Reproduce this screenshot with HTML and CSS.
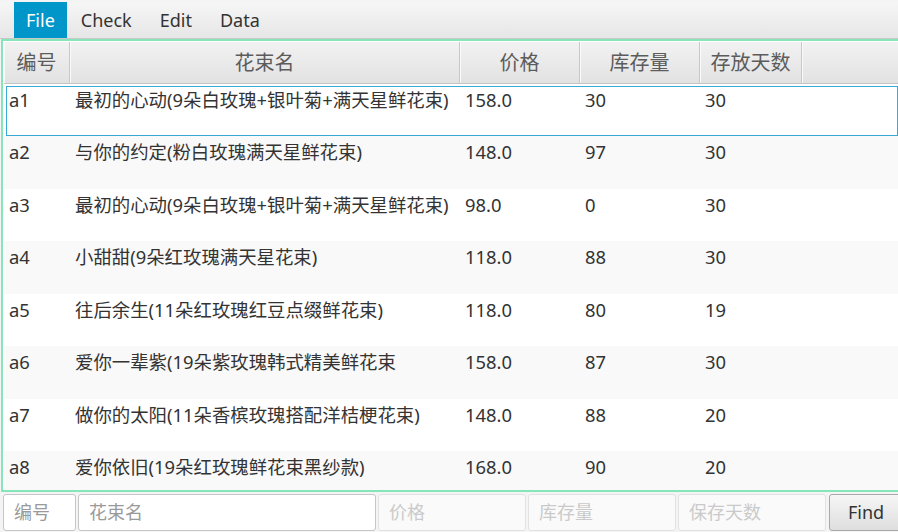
FILE: index.html
```html
<!DOCTYPE html>
<html>
<head>
<meta charset="utf-8">
<link rel="stylesheet" href="styles.css">
</head>
<body>
<div class="app">
  <div class="menubar">
    <div class="menu active">File</div>
    <div class="menu">Check</div>
    <div class="menu">Edit</div>
    <div class="menu">Data</div>
  </div>
  <div class="table">
    <div class="header">
      <div class="hcell c1">编号</div>
      <div class="hcell c2">花束名</div>
      <div class="hcell c3">价格</div>
      <div class="hcell c4">库存量</div>
      <div class="hcell c5">存放天数</div>
      <div class="hcell filler"></div>
    </div>
    <div class="body">
      <div class="row selected"><div class="cell c1">a1</div><div class="cell c2">最初的心动(9朵白玫瑰+银叶菊+满天星鲜花束)</div><div class="cell c3">158.0</div><div class="cell c4">30</div><div class="cell c5">30</div></div>
      <div class="row odd"><div class="cell c1">a2</div><div class="cell c2">与你的约定(粉白玫瑰满天星鲜花束)</div><div class="cell c3">148.0</div><div class="cell c4">97</div><div class="cell c5">30</div></div>
      <div class="row"><div class="cell c1">a3</div><div class="cell c2">最初的心动(9朵白玫瑰+银叶菊+满天星鲜花束)</div><div class="cell c3">98.0</div><div class="cell c4">0</div><div class="cell c5">30</div></div>
      <div class="row odd"><div class="cell c1">a4</div><div class="cell c2">小甜甜(9朵红玫瑰满天星花束)</div><div class="cell c3">118.0</div><div class="cell c4">88</div><div class="cell c5">30</div></div>
      <div class="row"><div class="cell c1">a5</div><div class="cell c2">往后余生(11朵红玫瑰红豆点缀鲜花束)</div><div class="cell c3">118.0</div><div class="cell c4">80</div><div class="cell c5">19</div></div>
      <div class="row odd"><div class="cell c1">a6</div><div class="cell c2">爱你一辈紫(19朵紫玫瑰韩式精美鲜花束</div><div class="cell c3">158.0</div><div class="cell c4">87</div><div class="cell c5">30</div></div>
      <div class="row"><div class="cell c1">a7</div><div class="cell c2">做你的太阳(11朵香槟玫瑰搭配洋桔梗花束)</div><div class="cell c3">148.0</div><div class="cell c4">88</div><div class="cell c5">20</div></div>
      <div class="row odd"><div class="cell c1">a8</div><div class="cell c2">爱你依旧(19朵红玫瑰鲜花束黑纱款)</div><div class="cell c3">168.0</div><div class="cell c4">90</div><div class="cell c5">20</div></div>
    </div>
  </div>
  <div class="searchbar">
    <div class="field f1">编号</div>
    <div class="field f2">花束名</div>
    <div class="field f3 disabled">价格</div>
    <div class="field f4 disabled">库存量</div>
    <div class="field f5 disabled">保存天数</div>
    <div class="button">Find</div>
  </div>
</div>
</body>
</html>
```

FILE: styles.css
```css
html, body {
  margin: 0;
  padding: 0;
}
body {
  width: 898px;
  height: 532px;
  overflow: hidden;
  background: #f4f4f4;
  font-family: "Noto Sans", "Noto Sans CJK SC", sans-serif;
  font-size: 18px;
  color: #333;
}
.app {
  width: 898px;
  height: 532px;
  display: flex;
  flex-direction: column;
  overflow: hidden;
}
.menubar {
  height: 36px;
  margin-top: 2px;
  padding-left: 14px;
  display: flex;
  background: linear-gradient(#f6f6f6, #e6e6e6);
  border-bottom: 1px solid #c8c8c8;
  flex: none;
}
.menu {
  padding: 0 14px;
  line-height: 36px;
  color: #333;
}
.menu.active {
  padding: 0 12px;
  background: #0096c9;
  color: #fff;
}
.table {
  flex: none;
  height: 453px;
  margin-left: 1px;
  border-top: 2px solid #86e6b9;
  border-left: 2px solid #86e6b9;
  border-bottom: 2px solid #86e6b9;
  background: #fff;
  padding: 1px 0 0 1px;
  display: flex;
  flex-direction: column;
  overflow: hidden;
  box-sizing: border-box;
}
.header {
  flex: none;
  height: 42px;
  display: flex;
  background: linear-gradient(#f2f2f2, #e2e2e2);
  border-bottom: 1px solid #c4c4c4;
  box-sizing: border-box;
}
.hcell {
  box-sizing: border-box;
  border-right: 1px solid #c8c8c8;
  box-shadow: inset 1px 0 0 #fafafa;
  text-align: center;
  line-height: 42px;
  color: #5c5c5c;
  font-size: 20px;
}
.c1 { width: 66px; }
.c2 { width: 390px; }
.c3 { width: 120px; }
.c4 { width: 120px; }
.c5 { width: 102px; }
.filler { flex: 1; border-right: none; }
.body {
  flex: 1;
  overflow: hidden;
}
.row {
  height: 52.43px;
  display: flex;
  box-sizing: border-box;
  background: #fff;
}
.row.odd {
  background: #f9f9f9;
}
.row.selected {
  border: 1px solid #3aa9d6;
  margin: 2px 0 0 2px;
  height: 50.43px;
  background: #fff;
}
.cell {
  box-sizing: border-box;
  padding: 4px 0 0 5px;
  line-height: 24px;
  font-size: 18.4px;
  white-space: nowrap;
  color: #333;
}
.row.selected .cell { padding-top: 1px; }
.row.selected .c1 { width: 63px; padding-left: 2px; }
.searchbar {
  flex: 1;
  display: flex;
  gap: 2px;
  padding: 2px 0 0 3px;
  background: #f4f4f4;
}
.field {
  box-sizing: border-box;
  height: 37px;
  border: 1px solid #c6c6c6;
  border-radius: 3px;
  background: #fff;
  color: #9a9a9a;
  padding-left: 10px;
  line-height: 34px;
  flex: none;
}
.field.disabled {
  border-color: #e2e2e2;
  color: #cacaca;
  background: #fafafa;
}
.f1 { width: 73px; }
.f2 { width: 298px; }
.f3 { width: 148px; }
.f4 { width: 148px; }
.f5 { width: 148px; }
.button {
  box-sizing: border-box;
  height: 37px;
  margin-left: 1px;
  width: 80px;
  border: 1px solid #a8a8a8;
  border-radius: 3px;
  background: linear-gradient(#f6f6f6, #dedede);
  padding-left: 18px;
  line-height: 34px;
  color: #333;
  flex: none;
}
```
